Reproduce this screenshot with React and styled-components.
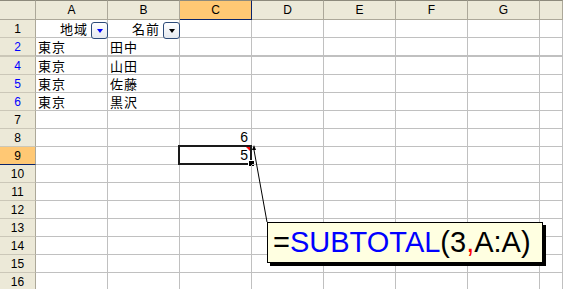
import styled, { createGlobalStyle } from "styled-components";

const GlobalStyle = createGlobalStyle`
  html, body {
    margin: 0;
    background: #fff;
    overflow: hidden;
  }
`;

const Sheet = styled.div`
  position: relative;
  width: 563px;
  height: 289px;
  overflow: hidden;
  display: grid;
  grid-template-columns: 36px repeat(7, 72px) 1fr;
  align-content: start;
`;

const Corner = styled.div`
  height: 20px;
  box-sizing: border-box;
  background: #ece9d8;
  border-top: 1px solid #8d8a7c;
  border-bottom: 1px solid #aca899;
  border-right: 1px solid #aca899;
`;

const ColHeader = styled.div`
  height: 20px;
  box-sizing: border-box;
  background: ${(p) => (p.$selected ? "#ffc874" : "#ece9d8")};
  border-top: 1px solid #8d8a7c;
  border-bottom: 1px solid ${(p) => (p.$selected ? "#0a246a" : "#aca899")};
  border-right: 1px solid ${(p) => (p.$selected ? "#0a246a" : "#aca899")};
  display: flex;
  align-items: center;
  justify-content: center;
  font: 12px/14px "Liberation Sans", Arial, sans-serif;
  color: #000;
`;

const RowHeader = styled.div`
  height: ${(p) => (p.$thick ? 19 : 18)}px;
  box-sizing: border-box;
  background: ${(p) => (p.$selected ? "#ffc874" : "#ece9d8")};
  border-right: 1px solid #aca899;
  border-bottom: ${(p) => (p.$thick ? 2 : 1)}px solid
    ${(p) => (p.$selected ? "#0a246a" : "#cbc7b8")};
  display: flex;
  align-items: center;
  justify-content: center;
  font: 12px/14px "Liberation Sans", Arial, sans-serif;
  color: ${(p) => (p.$filtered ? "#0000ff" : "#000")};
`;

const Cell = styled.div`
  position: relative;
  height: ${(p) => (p.$thick ? 19 : 18)}px;
  box-sizing: border-box;
  border-right: 1px solid #c0c0c0;
  border-bottom: ${(p) => (p.$thick ? 2 : 1)}px solid #c0c0c0;
  display: flex;
  align-items: center;
  justify-content: ${(p) => (p.$num ? "flex-end" : "flex-start")};
  padding: 0 ${(p) => (p.$num ? 3 : 0)}px 0 ${(p) => (p.$num ? 0 : 2)}px;
  font: ${(p) =>
    p.$num
      ? '14px/15px "Liberation Sans", Arial, sans-serif'
      : '13px/14px "Noto Sans CJK JP", sans-serif'};
  letter-spacing: ${(p) => (p.$num ? 0 : 1)}px;
  color: #000;
  white-space: nowrap;
`;

const HeadCell = styled(Cell)`
  justify-content: flex-end;
  gap: 3px;
  padding: 0;
`;

const FilterButton = styled.span`
  align-self: flex-start;
  margin-top: 2px;
  margin-right: -1px;
  width: 17px;
  height: 17px;
  box-sizing: border-box;
  border: 1px solid #2c4a78;
  border-radius: 3px;
  background: linear-gradient(#ffffff, #e4e8ef);
  display: flex;
  align-items: center;
  justify-content: center;
  &::after {
    content: "";
    border-left: 3.5px solid transparent;
    border-right: 3.5px solid transparent;
    border-top: 4px solid ${(p) => (p.$active ? "#0000ff" : "#000")};
  }
`;

const Selection = styled.div`
  position: absolute;
  left: -2px;
  top: -2px;
  width: 74px;
  height: 20px;
  box-sizing: border-box;
  border: 2px solid #1a1a1a;
`;

const FillHandle = styled.div`
  position: absolute;
  left: 69px;
  top: 14px;
  width: 5px;
  height: 5px;
  background: #000;
  outline: 1px solid #fff;
`;

const CommentMark = styled.div`
  position: absolute;
  right: 1px;
  top: 0;
  width: 0;
  height: 0;
  border-top: 4px solid #ff0000;
  border-left: 4px solid transparent;
`;

const Connector = styled.svg`
  position: absolute;
  left: 248px;
  top: 142px;
  pointer-events: none;
`;

const Comment = styled.div`
  position: absolute;
  left: 267px;
  top: 222px;
  width: 276px;
  height: 41px;
  box-sizing: border-box;
  border: 1px solid #000;
  background: #ffffe1;
  box-shadow: 3px 3px 0 #000;
  padding-left: 5px;
  font: 29px/39px "Liberation Sans", Arial, sans-serif;
  color: #000;
  white-space: nowrap;
`;

const Fn = styled.span`
  color: #0000ff;
`;

const Comma = styled.span`
  color: #ff0000;
`;

const columns = ["A", "B", "C", "D", "E", "F", "G", ""];

const rows = [
  { n: 1, head: true },
  { n: 2, a: "東京", b: "田中", filtered: true, thick: true },
  { n: 4, a: "東京", b: "山田", filtered: true },
  { n: 5, a: "東京", b: "佐藤", filtered: true },
  { n: 6, a: "東京", b: "黒沢", filtered: true },
  { n: 7 },
  { n: 8, c: "6" },
  { n: 9, c: "5", selected: true },
  { n: 10 },
  { n: 11 },
  { n: 12 },
  { n: 13 },
  { n: 14 },
  { n: 15 },
  { n: 16 },
];

function Row({ row }) {
  return (
    <>
      <RowHeader
        $thick={row.thick}
        $selected={row.selected}
        $filtered={row.filtered}
      >
        {row.n}
      </RowHeader>
      {columns.map((col, i) => {
        if (row.head && col === "A")
          return (
            <HeadCell key={i}>
              地域
              <FilterButton $active />
            </HeadCell>
          );
        if (row.head && col === "B")
          return (
            <HeadCell key={i}>
              名前
              <FilterButton />
            </HeadCell>
          );
        if (col === "A")
          return (
            <Cell key={i} $thick={row.thick}>
              {row.a}
            </Cell>
          );
        if (col === "B")
          return (
            <Cell key={i} $thick={row.thick}>
              {row.b}
            </Cell>
          );
        if (col === "C")
          return (
            <Cell key={i} $num $thick={row.thick}>
              {row.c}
              {row.selected && (
                <>
                  <CommentMark />
                  <Selection />
                  <FillHandle />
                </>
              )}
            </Cell>
          );
        return <Cell key={i} $thick={row.thick} />;
      })}
    </>
  );
}

export default function App() {
  return (
    <>
      <GlobalStyle />
      <Sheet>
        <Corner />
        {columns.map((col, i) => (
          <ColHeader key={i} $selected={col === "C"}>
            {col}
          </ColHeader>
        ))}
        {rows.map((row) => (
          <Row key={row.n} row={row} />
        ))}
        <Connector width="24" height="84" viewBox="0 0 24 84">
          <polygon points="6,3 4,8 8,8" fill="#000" />
          <line x1="6" y1="8" x2="19" y2="80" stroke="#000" strokeWidth="1" />
        </Connector>
        <Comment>
          =<Fn>SUBTOTAL</Fn>(3<Comma>,</Comma>A:A)
        </Comment>
      </Sheet>
    </>
  );
}
